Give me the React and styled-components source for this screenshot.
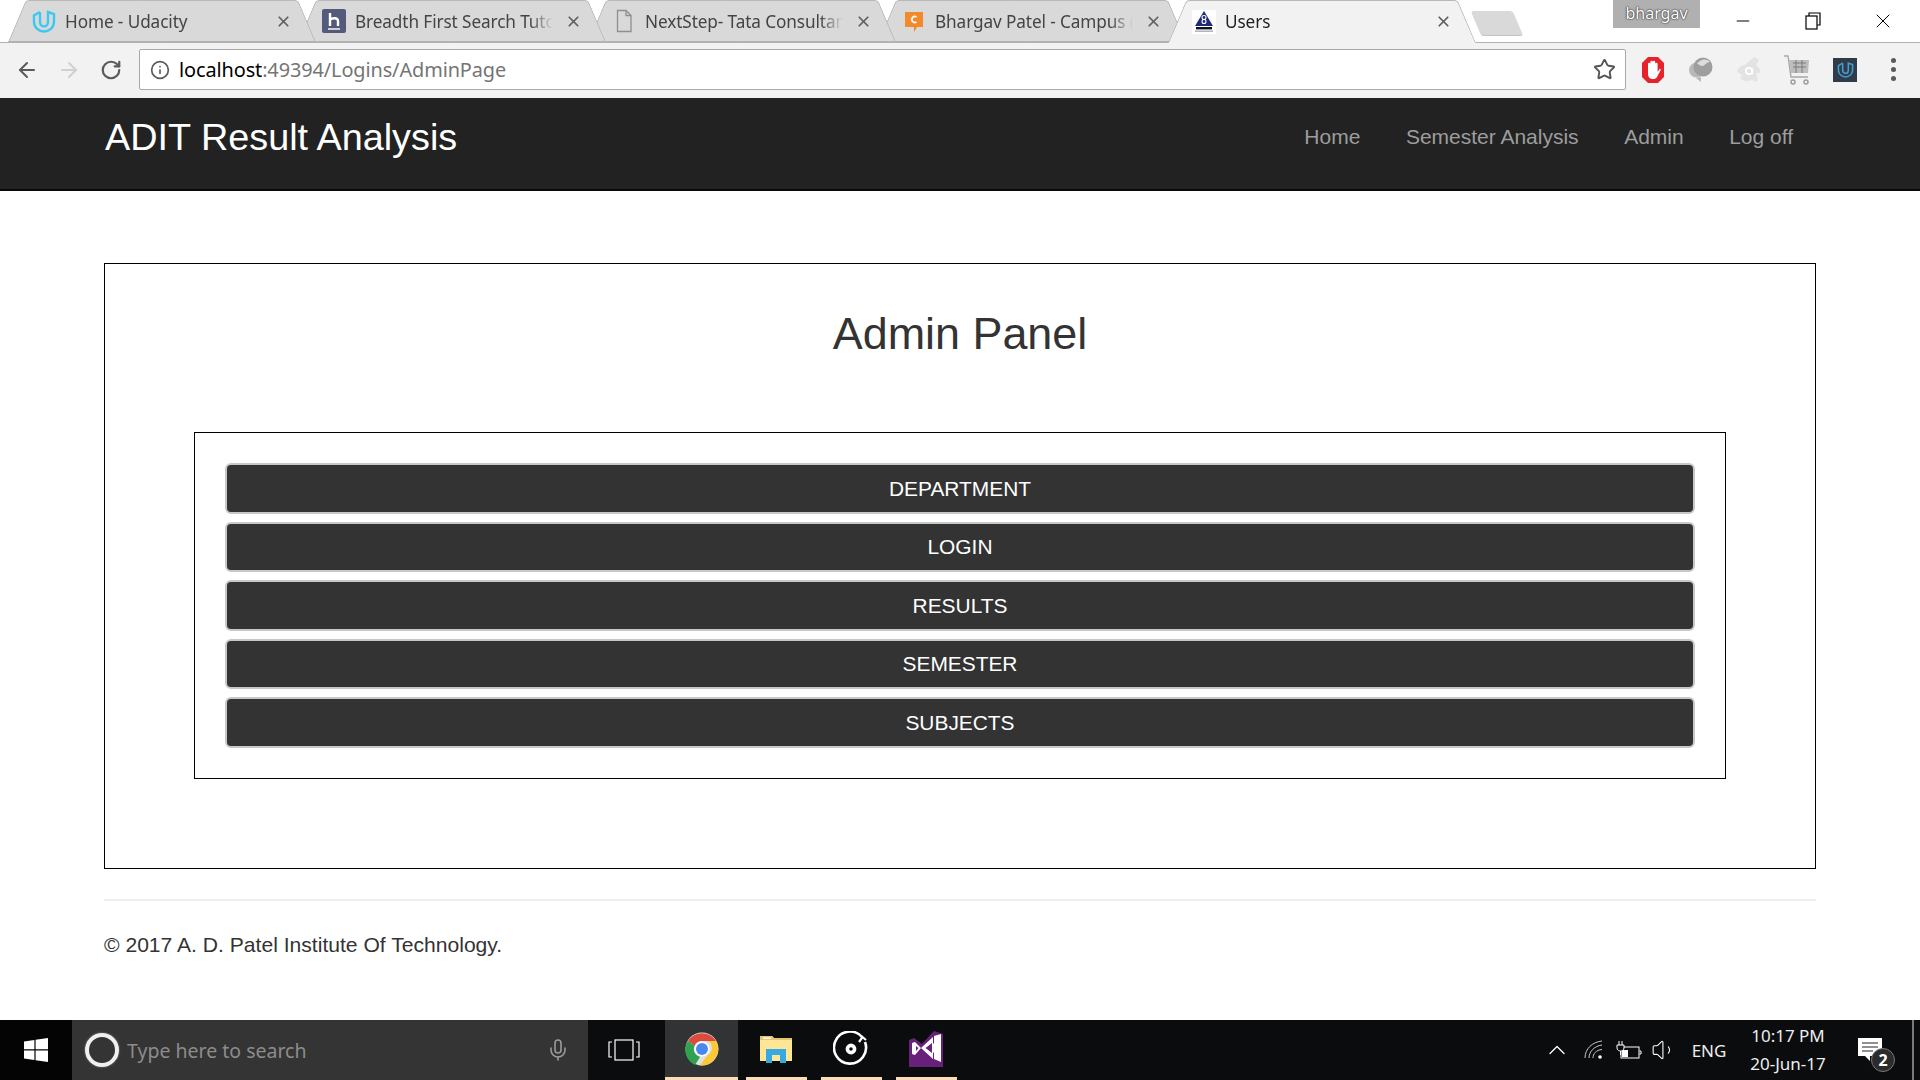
import React from 'react'
import styled, { createGlobalStyle } from 'styled-components'
import { ArrowLeft, ArrowRight, RotateCw, Star, Info, X, Minus, Mic, ChevronUp, Volume1 } from 'lucide-react'

const GlobalStyle = createGlobalStyle`
    html, body {
        margin: 0;
        padding: 0;
        background: #fff;
    }
    * {
        box-sizing: border-box;
    }
`

const UdacityMark = ({ size = 24, color = '#3cc8f0', width = 2.4 }) => (
    <svg width={size} height={size} viewBox="0 0 24 24" fill="none" stroke={color} strokeWidth={width}>
        <path d="M8 3 L2 6.5 V13 C2 18.5 7 22.5 12 22.5 C17 22.5 22 18.5 22 13 V5 L16 3 V13 C16 16 14 17.5 12 17.5" />
        <path d="M8 3 V13 C8 15.5 9.5 17 12 17.5" />
    </svg>
)

const HackerIcon = () => (
    <svg width="24" height="24" viewBox="0 0 24 24">
        <rect width="24" height="24" rx="2" fill="#535a7a" />
        <path d="M8 4 V17 M8 11 C10 8.5 16 8.5 16 12 V17" stroke="#fff" strokeWidth="2.4" fill="none" />
        <path d="M6 20 H18" stroke="#fff" strokeWidth="1.4" />
    </svg>
)

const PageIcon = () => (
    <svg width="24" height="24" viewBox="0 0 24 24" fill="none" stroke="#8f8f8f" strokeWidth="1.3">
        <path d="M5.5 1.5 H14 L19 6.5 V22.5 H5.5 Z" />
        <path d="M14 1.5 V6.5 H19" />
    </svg>
)

const CampusIcon = () => (
    <svg width="24" height="24" viewBox="0 0 24 24">
        <path d="M3 3 H21 V18 H15 L12 23 V18 H3 Z" fill="#f08a2a" />
        <path d="M14.5 8 A3 3 0 1 0 14.5 13" stroke="#fff" strokeWidth="1.8" fill="none" />
    </svg>
)

const AditIcon = () => (
    <svg width="24" height="24" viewBox="0 0 24 24">
        <rect width="24" height="24" fill="#fff" />
        <path d="M12 1 L21 16 H3 Z" fill="#1c2a78" />
        <circle cx="12" cy="7.5" r="2" fill="none" stroke="#fff" strokeWidth="1.1" />
        <circle cx="12" cy="11.5" r="2" fill="none" stroke="#fff" strokeWidth="1.1" />
        <rect x="4" y="17" width="16" height="2.4" fill="#111" />
        <rect x="3" y="20.5" width="18" height="1.4" fill="#a8acc4" />
    </svg>
)

const AdblockIcon = () => (
    <svg width="24" height="28" viewBox="0 0 24 28">
        <path d="M7 1 H17 L23 7 V21 L17 27 H7 L1 21 V7 Z" fill="#e6222a" />
        <path d="M7 16 V8 a1.2 1.2 0 0 1 2.4 0 V6 a1.2 1.2 0 0 1 2.4 0 V6 a1.2 1.2 0 0 1 2.4 0 V8 a1.2 1.2 0 0 1 2.4 0 V16 L18.5 13 C19.5 12.5 20 13.5 19.5 14.5 L16 21 C15 22.5 14 23 12 23 C9 23 7 21 7 18 Z" fill="#fff" />
    </svg>
)

const GlobeIcon = () => (
    <svg width="26" height="28" viewBox="0 0 26 28">
        <circle cx="8.5" cy="14" r="7.5" fill="#b8b8b8" />
        <circle cx="15" cy="11" r="9.5" fill="#9e9e9e" />
        <path d="M9 8 C12 3 19 2 22 6 C18 6 17 10 14 10 C12 10 11 8 9 8 Z" fill="#dcdcdc" />
        <path d="M8 22 L13 26 L13 21 Z" fill="#b8b8b8" />
    </svg>
)

const AvastIcon = () => (
    <svg width="26" height="30" viewBox="0 0 26 30">
        <path d="M19 2 L23 5 L20 11 C23 12 25 15 24 18 L20 18 C21 21 22 24 21 27 L16 25 C11 27 6 26 4 23 L6 20 L1 17 C2 13 5 10 9 10 C12 7 15 4 19 2 Z" fill="#e3e3e3" />
        <circle cx="13" cy="16" r="3.2" fill="none" stroke="#fff" strokeWidth="1.8" />
        <path d="M16.2 13 V19.5" stroke="#fff" strokeWidth="1.6" />
    </svg>
)

const CartIcon = () => (
    <svg width="26" height="30" viewBox="0 0 26 30" fill="none">
        <path d="M0 1 H4 L7 22 H24" stroke="#a8a8a8" strokeWidth="1.4" />
        <path d="M5 5 H25 L24 18 H7 Z" fill="#bdbdbd" />
        <path d="M9 8 H22 M9 12 H22 M12 5 V18 M18 5 V18" stroke="#7d7d7d" strokeWidth="1" />
        <circle cx="9" cy="27" r="2" stroke="#9a9a9a" strokeWidth="1.4" />
        <circle cx="22" cy="27" r="2" stroke="#9a9a9a" strokeWidth="1.4" />
    </svg>
)

const UdacityExt = () => (
    <ExtBadge>
        <UdacityMark size={17} color="#4a9bd0" width={2.2} />
    </ExtBadge>
)

const RestoreIcon = () => (
    <svg width="16" height="18" viewBox="0 0 16 18" fill="none" stroke="#000" strokeWidth="1.2">
        <rect x="1" y="4" width="11" height="13" />
        <path d="M4 4 V1 H15 V13 H12" />
    </svg>
)

const WindowsIcon = () => (
    <svg width="24" height="24" viewBox="0 0 24 24" fill="#fff">
        <path d="M0 3.4 L10.4 2 V11.3 H0 Z M11.6 1.8 L24 0 V11.3 H11.6 Z M0 12.6 H10.4 V22 L0 20.6 Z M11.6 12.6 H24 V24 L11.6 22.2 Z" />
    </svg>
)

const TaskViewIcon = () => (
    <svg width="32" height="22" viewBox="0 0 32 22" fill="none" stroke="#fff" strokeWidth="1.2">
        <rect x="7" y="1" width="18" height="20" />
        <path d="M4 3 H1 V18 H4 M28 3 H31 V18 H28" />
    </svg>
)

const ChromeIcon = () => (
    <svg width="34" height="34" viewBox="0 0 34 34">
        <circle cx="17" cy="17" r="16.5" fill="#e0e0e0" />
        <path d="M3 9 A16.5 16.5 0 0 1 31 9 L17 9 A8 8 0 0 0 9.5 14 Z" fill="#db4c3f" />
        <path d="M3 9 L9.5 14 A8 8 0 0 0 15 25 L10 33 A16.5 16.5 0 0 1 3 9 Z" fill="#2fa24f" />
        <path d="M31 9 A16.5 16.5 0 0 1 15 33.5 L22.5 23 A8 8 0 0 0 23 9 Z" fill="#fcc934" />
        <circle cx="17" cy="17" r="7.6" fill="#fff" />
        <circle cx="17" cy="17" r="6" fill="#4b88ee" />
    </svg>
)

const FolderIcon = () => (
    <svg width="32" height="28" viewBox="0 0 32 28">
        <path d="M0 1 H12 L14 3 H32 V26 H0 Z" fill="#ffe596" />
        <path d="M0 1 H12 L14 3 H32 V5 H0 Z" fill="#e8c66e" />
        <rect x="3" y="2.5" width="8" height="1.4" fill="#fff" />
        <path d="M6 28 V14 H26 V28 H20 V20 H12 V28 Z" fill="#36a9e1" />
    </svg>
)

const GrooveIcon = () => (
    <svg width="36" height="36" viewBox="0 0 36 36" fill="none" stroke="#fff">
        <path d="M29 6 A16 16 0 1 0 32 11" strokeWidth="2.6" />
        <path d="M26 11 L29.5 6 L33 9" strokeWidth="2.2" />
        <circle cx="18" cy="18" r="3.6" strokeWidth="3.6" />
    </svg>
)

const StudioIcon = () => (
    <svg width="34" height="36" viewBox="0 0 34 36">
        <path d="M0 9 L0 36 H34 V3 L25 0 L13 13 L5 7 Z" fill="#68217a" />
        <path d="M25 5 L32 3 V31 L25 28 V22 L20 17 L25 12 Z M3 12 L6 11 L12 17 L6 24 L3 23 Z M12 17 L24 6 V28 Z" fill="#fff" />
        <path d="M16.5 17 L23 12 V22 Z" fill="#68217a" />
        <path d="M7 15 L9.5 17 L7 20 Z" fill="#68217a" />
    </svg>
)

const WifiIcon = () => (
    <svg width="20" height="20" viewBox="0 0 20 20" fill="none" stroke="#c9c9c9" strokeWidth="1">
        <path d="M1 18 C1 9 8 2 18 1" />
        <path d="M5 18 C5 12 10 6 18 5" />
        <path d="M9 18 C9 14 12 10 18 9.5" />
        <circle cx="16" cy="17" r="1.8" fill="#fff" stroke="none" />
    </svg>
)

const BatteryIcon = () => (
    <svg width="26" height="20" viewBox="0 0 26 20" fill="none" stroke="#fff" strokeWidth="1">
        <rect x="5" y="7" width="18" height="11" />
        <path d="M23.5 11 H25 V14 H23.5" />
        <rect x="6" y="10" width="6" height="7" fill="#fff" stroke="none" />
        <path d="M1 5 H8 V8 C8 10 6 11 4.5 11 C3 11 1 10 1 8 Z M3 5 V1 M6 5 V1 M4.5 11 V15" fill="#0b0c0e" />
    </svg>
)

const NoticeIcon = () => (
    <svg width="26" height="26" viewBox="0 0 26 26">
        <path d="M1 1 H25 V19 H13 L13 24 L8 19 H1 Z" fill="#fff" />
        <path d="M5 6 H21 M5 10 H21 M5 14 H16" stroke="#222" strokeWidth="1" />
    </svg>
)

const tabs = [
    { title: 'Home - Udacity', icon: <UdacityMark /> },
    { title: 'Breadth First Search Tuto', icon: <HackerIcon /> },
    { title: 'NextStep- Tata Consultan', icon: <PageIcon /> },
    { title: 'Bhargav Patel - Campus (', icon: <CampusIcon /> },
    { title: 'Users', icon: <AditIcon />, active: true },
]

const extensions = [<AdblockIcon />, <GlobeIcon />, <AvastIcon />, <CartIcon />, <UdacityExt />]

const navLinks = ['Home', 'Semester Analysis', 'Admin', 'Log off']

const adminLinks = ['DEPARTMENT', 'LOGIN', 'RESULTS', 'SEMESTER', 'SUBJECTS']

const App = () => {
    return (
        <Page>
            <GlobalStyle />
            <TabBar>
                <TabStrip>
                    {tabs.map((tab, i) => (
                        <Tab key={tab.title} $active={tab.active} $z={tab.active ? 9 : 5 - i}>
                            <Favicon>{tab.icon}</Favicon>
                            <TabTitle $active={tab.active}>{tab.title}</TabTitle>
                            <X size={17} strokeWidth={2.4} color="#5f5f5f" />
                        </Tab>
                    ))}
                </TabStrip>
                <NewTab />
                <ProfileBadge>bhargav</ProfileBadge>
                <WindowControls>
                    <WindowButton><Minus size={20} strokeWidth={1.2} color="#000" /></WindowButton>
                    <WindowButton><RestoreIcon /></WindowButton>
                    <WindowButton><X size={24} strokeWidth={1} color="#000" /></WindowButton>
                </WindowControls>
            </TabBar>

            <Toolbar>
                <ToolButton><ArrowLeft size={24} strokeWidth={2} color="#5a5a5a" /></ToolButton>
                <ToolButton><ArrowRight size={24} strokeWidth={2} color="#d0d0d0" /></ToolButton>
                <ToolButton><RotateCw size={22} strokeWidth={2.4} color="#5a5a5a" /></ToolButton>
                <UrlBox>
                    <Info size={20} strokeWidth={2} color="#5a5a5a" />
                    <UrlText>localhost<UrlRest>:49394/Logins/AdminPage</UrlRest></UrlText>
                    <Star size={23} strokeWidth={2} color="#555" />
                </UrlBox>
                <Extensions>
                    {extensions.map((icon, i) => <ToolCell key={i}>{icon}</ToolCell>)}
                    <ToolCell><Kebab><i /><i /><i /></Kebab></ToolCell>
                </Extensions>
            </Toolbar>

            <Navbar>
                <Brand>ADIT Result Analysis</Brand>
                <NavList>
                    {navLinks.map(link => <NavLink key={link}>{link}</NavLink>)}
                </NavList>
            </Navbar>

            <Main>
                <OuterPanel>
                    <Title>Admin Panel</Title>
                    <InnerPanel>
                        {adminLinks.map(link => <AdminButton key={link}>{link}</AdminButton>)}
                    </InnerPanel>
                </OuterPanel>
                <Rule />
                <Footer>© 2017 A. D. Patel Institute Of Technology.</Footer>
            </Main>

            <Taskbar>
                <StartCell><WindowsIcon /></StartCell>
                <SearchBox>
                    <Cortana />
                    <SearchText>Type here to search</SearchText>
                    <Mic size={24} strokeWidth={1.6} color="#9a9a9a" />
                </SearchBox>
                <TaskViewCell><TaskViewIcon /></TaskViewCell>
                <AppCell $current $wide><ChromeIcon /></AppCell>
                <AppCell><FolderIcon /></AppCell>
                <AppCell><GrooveIcon /></AppCell>
                <AppCell><StudioIcon /></AppCell>
                <Tray>
                    <TrayCell $w={37}><ChevronUp size={28} strokeWidth={1.1} color="#fff" /></TrayCell>
                    <TrayCell $w={37}><WifiIcon /></TrayCell>
                    <TrayCell $w={33}><BatteryIcon /></TrayCell>
                    <TrayCell $w={38}><Volume1 size={26} strokeWidth={1} color="#fff" /></TrayCell>
                    <TrayLang>ENG</TrayLang>
                    <Clock>
                        <span>10:17 PM</span>
                        <span>20-Jun-17</span>
                    </Clock>
                    <Notice>
                        <NoticeIcon />
                        <NoticeCount>2</NoticeCount>
                    </Notice>
                    <ShowDesktop />
                </Tray>
            </Taskbar>
        </Page>
    )
}

export default App

const chromeFont = `"Noto Sans", "Open Sans", sans-serif`
const pageFont = `"Liberation Sans", Arial, sans-serif`

const Page = styled.div`
    height: 1080px;
    overflow: hidden;
    display: flex;
    flex-direction: column;
    font-family: ${pageFont};
`
const TabBar = styled.div`
    height: 43px;
    display: flex;
    align-items: flex-start;
    background: #fff;
    border-bottom: 1px solid #b2b2b2;
`
const TabStrip = styled.div`
    display: flex;
    padding-left: 8px;
`
const Tab = styled.div`
    position: relative;
    z-index: ${props => props.$z};
    width: 308px;
    height: ${props => (props.$active ? '43px' : '42px')};
    margin-right: -18px;
    padding-left: 24px;
    display: flex;
    align-items: center;
    font-family: ${chromeFont};

    &:before, &:after {
        content: "";
        position: absolute;
        top: 0;
        bottom: 0;
        width: 50%;
        z-index: -1;
        background: ${props => (props.$active ? '#f2f2f2' : '#d9d9d9')};
        border-top: 1px solid #b8b8b8;
        border-bottom: ${props => (props.$active ? 'none' : '1px solid #b2b2b2')};
    }
    &:before {
        left: 0;
        border-left: 1px solid #b2b2b2;
        border-top-left-radius: 4px;
        transform-origin: bottom left;
        transform: skewX(-23deg);
    }
    &:after {
        right: 0;
        border-right: 1px solid #b2b2b2;
        border-top-right-radius: 4px;
        transform-origin: bottom right;
        transform: skewX(23deg);
    }
`
const Favicon = styled.span`
    width: 24px;
    height: 28px;
    margin-right: 9px;
    display: flex;
    align-items: center;
    justify-content: center;
    flex: none;
`
const TabTitle = styled.span`
    width: 210px;
    flex: none;
    overflow: hidden;
    white-space: nowrap;
    font-size: 17.2px;
    letter-spacing: -0.1px;
    color: ${props => (props.$active ? '#222' : '#444')};
    mask-image: linear-gradient(to right, #000 175px, transparent 198px);
`
const NewTab = styled.div`
    width: 42px;
    height: 25px;
    margin: 11px 0 0 18px;
    background: #d9d9d9;
    border-radius: 3px;
    border-bottom: 1px solid #c4c4c4;
    transform: skewX(23deg);
`
const ProfileBadge = styled.div`
    width: 87px;
    height: 28px;
    margin-left: auto;
    margin-right: 8px;
    background: #b0b0b0;
    color: #fff;
    font-family: ${chromeFont};
    font-size: 16px;
    line-height: 26px;
    text-align: center;
    text-shadow: 0 0 2px #222, 0 0 1px #222;
`
const WindowControls = styled.div`
    display: flex;
    padding-right: 2px;
`
const WindowButton = styled.div`
    width: 70px;
    height: 42px;
    display: flex;
    align-items: center;
    justify-content: center;
`
const Toolbar = styled.div`
    height: 55px;
    display: flex;
    align-items: center;
    padding: 0 0 2px 6px;
    background: #f2f2f2;
`
const ToolButton = styled.div`
    width: 42px;
    display: flex;
    justify-content: center;
`
const UrlBox = styled.div`
    width: 1487px;
    height: 41px;
    margin-left: 7px;
    padding: 0 9px 0 10px;
    display: flex;
    align-items: center;
    background: #fff;
    border: 1px solid #a9a9a9;
    border-radius: 2px;
`
const UrlText = styled.div`
    flex: 1;
    margin-left: 9px;
    font-family: ${chromeFont};
    font-size: 19.9px;
    color: #000;
    letter-spacing: -0.1px;
`
const UrlRest = styled.span`
    color: #757575;
`
const Extensions = styled.div`
    display: flex;
    margin-left: 3px;
`
const ToolCell = styled.div`
    width: 48px;
    height: 32px;
    display: flex;
    align-items: center;
    justify-content: center;
`
const ExtBadge = styled.div`
    width: 24px;
    height: 24px;
    background: #2e3d49;
    display: flex;
    align-items: center;
    justify-content: center;
`
const Kebab = styled.div`
    display: flex;
    flex-direction: column;
    gap: 4px;

    i {
        display: block;
        width: 5px;
        height: 5px;
        border-radius: 50%;
        background: #5a5a5a;
    }
`
const Navbar = styled.div`
    height: 93px;
    padding: 0 127px 13px 105px;
    display: flex;
    align-items: center;
    justify-content: space-between;
    background: #222;
    border-bottom: 2px solid #080808;
`
const Brand = styled.div`
    font-size: 37.8px;
    color: #fff;
`
const NavList = styled.div`
    display: flex;
    gap: 45.5px;
`
const NavLink = styled.a`
    font-size: 21px;
    color: #9d9d9d;
`
const Main = styled.div`
    flex: 1;
    padding: 72px 104px 0;
`
const OuterPanel = styled.div`
    height: 606px;
    padding: 0 89px;
    border: 1px solid #000;
`
const Title = styled.h2`
    height: 168px;
    margin: 0;
    padding-top: 45px;
    font-size: 44.9px;
    font-weight: 400;
    line-height: 50px;
    text-align: center;
    color: #333;
`
const InnerPanel = styled.div`
    height: 347px;
    padding: 30px 30px 0;
    display: flex;
    flex-direction: column;
    gap: 8px;
    border: 1px solid #000;
`
const AdminButton = styled.button`
    height: 50.5px;
    flex: none;
    padding-top: 2px;
    background: #333;
    border: 2px solid #c8c8c8;
    border-radius: 6px;
    color: #fff;
    font-family: ${pageFont};
    font-size: 20.9px;
`
const Rule = styled.div`
    height: 2px;
    margin-top: 30px;
    background: #eee;
`
const Footer = styled.div`
    margin-top: 32px;
    font-size: 21.1px;
    color: #333;
`
const Taskbar = styled.div`
    height: 60px;
    display: flex;
    align-items: stretch;
    background: #0b0c0e;
`
const StartCell = styled.div`
    width: 72px;
    display: flex;
    align-items: center;
    justify-content: center;
    background: #040405;
`
const SearchBox = styled.div`
    width: 516px;
    padding: 0 18px 0 13px;
    display: flex;
    align-items: center;
    background: #343434;
`
const Cortana = styled.div`
    width: 34px;
    height: 34px;
    border: 4px solid #f0f0f0;
    border-radius: 50%;
    box-shadow: 0 0 2px #999;
`
const SearchText = styled.div`
    flex: 1;
    margin-left: 8px;
    font-family: ${chromeFont};
    font-size: 19.5px;
    color: #8c8c8c;
`
const TaskViewCell = styled.div`
    width: 77px;
    padding-right: 6px;
    display: flex;
    align-items: center;
    justify-content: center;
`
const AppCell = styled.div`
    position: relative;
    width: ${props => (props.$wide ? '73px' : '75px')};
    padding-bottom: 2px;
    display: flex;
    align-items: center;
    justify-content: center;
    background: ${props => (props.$current ? '#323334' : 'none')};

    &:after {
        content: "";
        position: absolute;
        left: ${props => (props.$wide ? '0' : '8px')};
        right: ${props => (props.$wide ? '0' : '6px')};
        bottom: 0;
        height: 3px;
        background: #fcdcb5;
    }
`
const Tray = styled.div`
    margin-left: auto;
    display: flex;
    align-items: center;
    color: #fff;
    font-family: ${chromeFont};
`
const TrayCell = styled.div`
    width: ${props => props.$w}px;
    display: flex;
    justify-content: center;
`
const TrayLang = styled.div`
    width: 46px;
    margin-left: 3px;
    font-size: 17px;
    text-align: center;
    color: #eee;
`
const Clock = styled.div`
    width: 112px;
    display: flex;
    flex-direction: column;
    align-items: center;
    gap: 4px;
    font-size: 17px;
    line-height: 24px;
    color: #eee;
`
const Notice = styled.div`
    position: relative;
    width: 48px;
    margin-left: 2px;
    display: flex;
    justify-content: center;
`
const NoticeCount = styled.div`
    position: absolute;
    left: 25px;
    top: 11px;
    width: 24px;
    height: 24px;
    border-radius: 50%;
    border: 1px solid #777;
    background: #2b2b2b;
    color: #fff;
    font-size: 16px;
    font-weight: 700;
    line-height: 22px;
    text-align: center;
`
const ShowDesktop = styled.div`
    width: 2px;
    height: 60px;
    margin: 0 6px 0 18px;
    background: #7a7a7a;
`
